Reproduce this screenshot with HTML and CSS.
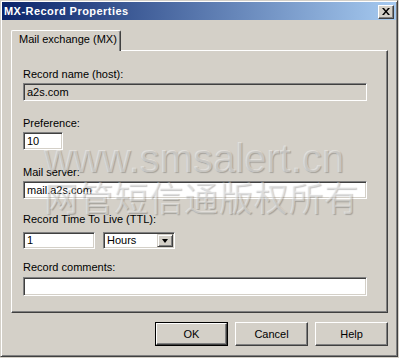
FILE: index.html
```html
<!DOCTYPE html>
<html>
<head>
<meta charset="utf-8">
<link rel="stylesheet" href="styles.css">
</head>
<body>
<div class="window">
  <div class="titlebar">
    <span class="title">MX-Record Properties</span>
    <div class="close">
      <svg width="8" height="7" viewBox="0 0 8 7"><path d="M0 0h2l2 2.5L6 0h2L5 3.5 8 7H6L4 4.5 2 7H0l3-3.5z" fill="#000"/></svg>
    </div>
  </div>
  <div class="content">
    <div class="tabs"><div class="tab">Mail exchange (MX)</div></div>
    <div class="panel">
      <div class="label l1">Record name (host):</div>
      <div class="edit ro e1">a2s.com</div>
      <div class="label l2">Preference:</div>
      <div class="edit e2">10</div>
      <div class="label l3">Mail server:</div>
      <div class="edit e3">mail.a2s.com</div>
      <div class="label l4">Record Time To Live (TTL):</div>
      <div class="ttlrow">
        <div class="edit e4">1</div>
        <div class="edit combo">
          <span class="combotext">Hours</span>
          <div class="dropbtn"><span class="arrow"></span></div>
        </div>
      </div>
      <div class="label l5">Record comments:</div>
      <div class="edit e5"></div>
    </div>
    <div class="buttons">
      <div class="btn default"><span class="btninner">OK</span></div>
      <div class="btn"><span class="btninner">Cancel</span></div>
      <div class="btn"><span class="btninner">Help</span></div>
    </div>
  </div>
  <div class="watermark">
    <div class="wm1">www.smsalert.cn</div>
    <div class="wm2">网管短信通版权所有</div>
  </div>
</div>
</body>
</html>
```
FILE: styles.css
```css
html, body {
  margin: 0;
  padding: 0;
  background: #d4d0c8;
}
body {
  font-family: "Liberation Sans", Arial, sans-serif;
  font-size: 11px;
  color: #000;
}
.window {
  position: relative;
  width: 398px;
  height: 357px;
  box-sizing: border-box;
  border: 1px solid;
  border-color: #d4d0c8 #404040 #404040 #d4d0c8;
  box-shadow: inset 1px 1px 0 #ffffff, inset -1px -1px 0 #808080;
  padding: 1px;
  background: #d4d0c8;
  overflow: hidden;
}
.titlebar {
  height: 18px;
  display: flex;
  align-items: flex-start;
  justify-content: space-between;
  background: linear-gradient(to right, #0a246a, #a6caf0);
}
.title {
  color: #fff;
  font-weight: bold;
  font-size: 11px;
  line-height: 18px;
  padding-left: 2px;
  letter-spacing: 0.45px;
}
.close {
  width: 16px;
  height: 14px;
  margin-top: 3px;
  margin-right: 2px;
  box-sizing: border-box;
  background: #d4d0c8;
  border: 1px solid;
  border-color: #ffffff #404040 #404040 #ffffff;
  box-shadow: inset -1px -1px 0 #808080;
  display: flex;
  align-items: center;
  justify-content: center;
}
.close svg {
  display: block;
  margin-left: -1px;
  margin-top: -1px;
}
.content {
  padding: 10px 8px 0 9px;
}
.tabs {
  display: flex;
  position: relative;
  z-index: 1;
  margin-bottom: -1px;
}
.tab {
  width: 110px;
  height: 21px;
  box-sizing: border-box;
  background: #d4d0c8;
  border-top: 1px solid #fff;
  border-left: 1px solid #fff;
  border-right: 1px solid #404040;
  box-shadow: inset -1px 0 0 #808080;
  border-radius: 2px 2px 0 0;
  padding: 2px 0 0 7px;
  line-height: 13px;
}
.panel {
  height: 263px;
  box-sizing: border-box;
  border: 1px solid;
  border-color: #ffffff #404040 #404040 #ffffff;
  box-shadow: inset -1px -1px 0 #808080;
  padding: 0 11px;
  display: flex;
  flex-direction: column;
  align-items: flex-start;
}
.label {
  height: 13px;
  line-height: 13px;
  white-space: nowrap;
}
.l1 { margin-top: 17px; }
.l2 { margin-top: 16px; }
.l3 { margin-top: 16px; }
.l4 { margin-top: 14px; }
.l5 { margin-top: 12px; }
.edit {
  box-sizing: border-box;
  height: 18px;
  border: 1px solid;
  border-color: #808080 #ffffff #ffffff #808080;
  box-shadow: inset 1px 1px 0 #404040, inset -1px -1px 0 #d4d0c8;
  background: #fff;
  padding: 0 3px;
  line-height: 16px;
  white-space: nowrap;
}
.edit.ro { background: #d4d0c8; }
.e1 { width: 344px; margin-top: 2px; }
.e2 { width: 40px; margin-top: 2px; }
.e3 { width: 344px; margin-top: 2px; }
.e5 { width: 344px; margin-top: 3px; height: 19px; }
.ttlrow {
  display: flex;
  gap: 8px;
  margin-top: 6px;
}
.e4 { width: 72px; height: 17px; line-height: 15px; }
.combo {
  width: 72px;
  height: 17px;
  line-height: 15px;
  display: flex;
  justify-content: space-between;
  padding: 1px;
}
.combotext {
  padding-left: 2px;
  line-height: 13px;
}
.dropbtn {
  width: 16px;
  height: 13px;
  box-sizing: border-box;
  background: #d4d0c8;
  border: 1px solid;
  border-color: #d4d0c8 #404040 #404040 #d4d0c8;
  box-shadow: inset 1px 1px 0 #fff, inset -1px -1px 0 #808080;
  display: flex;
  align-items: center;
  justify-content: center;
}
.arrow {
  width: 0;
  height: 0;
  border-left: 3.5px solid transparent;
  border-right: 3.5px solid transparent;
  border-top: 4px solid #000;
}
.buttons {
  display: flex;
  justify-content: flex-end;
  gap: 7px;
  margin-top: 9px;
}
.btn {
  width: 73px;
  height: 24px;
  box-sizing: border-box;
  border: 1px solid;
  border-color: #ffffff #404040 #404040 #ffffff;
  box-shadow: inset -1px -1px 0 #808080;
  display: flex;
  align-items: center;
  justify-content: center;
}
.btn.default {
  border: 1px solid #000;
  box-shadow: none;
}
.btn.default .btninner {
  width: 100%;
  height: 100%;
  box-sizing: border-box;
  border: 1px solid;
  border-color: #ffffff #404040 #404040 #ffffff;
  box-shadow: inset -1px -1px 0 #808080;
}
.btninner {
  display: flex;
  align-items: center;
  justify-content: center;
  line-height: 13px;
}
.watermark {
  position: absolute;
  left: 0;
  top: 0;
  pointer-events: none;
}
.wm1 {
  position: absolute;
  left: 43px;
  top: 137px;
  font-family: "Liberation Sans", Arial, sans-serif;
  font-size: 40px;
  line-height: 40px;
  white-space: nowrap;
  color: rgba(255, 255, 255, 0.4);
  text-shadow: 1px 1px 1px rgba(0, 0, 0, 0.22);
}
.wm2 {
  position: absolute;
  left: 43px;
  top: 173px;
  font-family: "Noto Sans CJK SC", sans-serif;
  font-size: 34px;
  line-height: 46px;
  letter-spacing: 1px;
  white-space: nowrap;
  color: rgba(255, 255, 255, 0.4);
  text-shadow: 1px 1px 1px rgba(0, 0, 0, 0.22);
}
```
